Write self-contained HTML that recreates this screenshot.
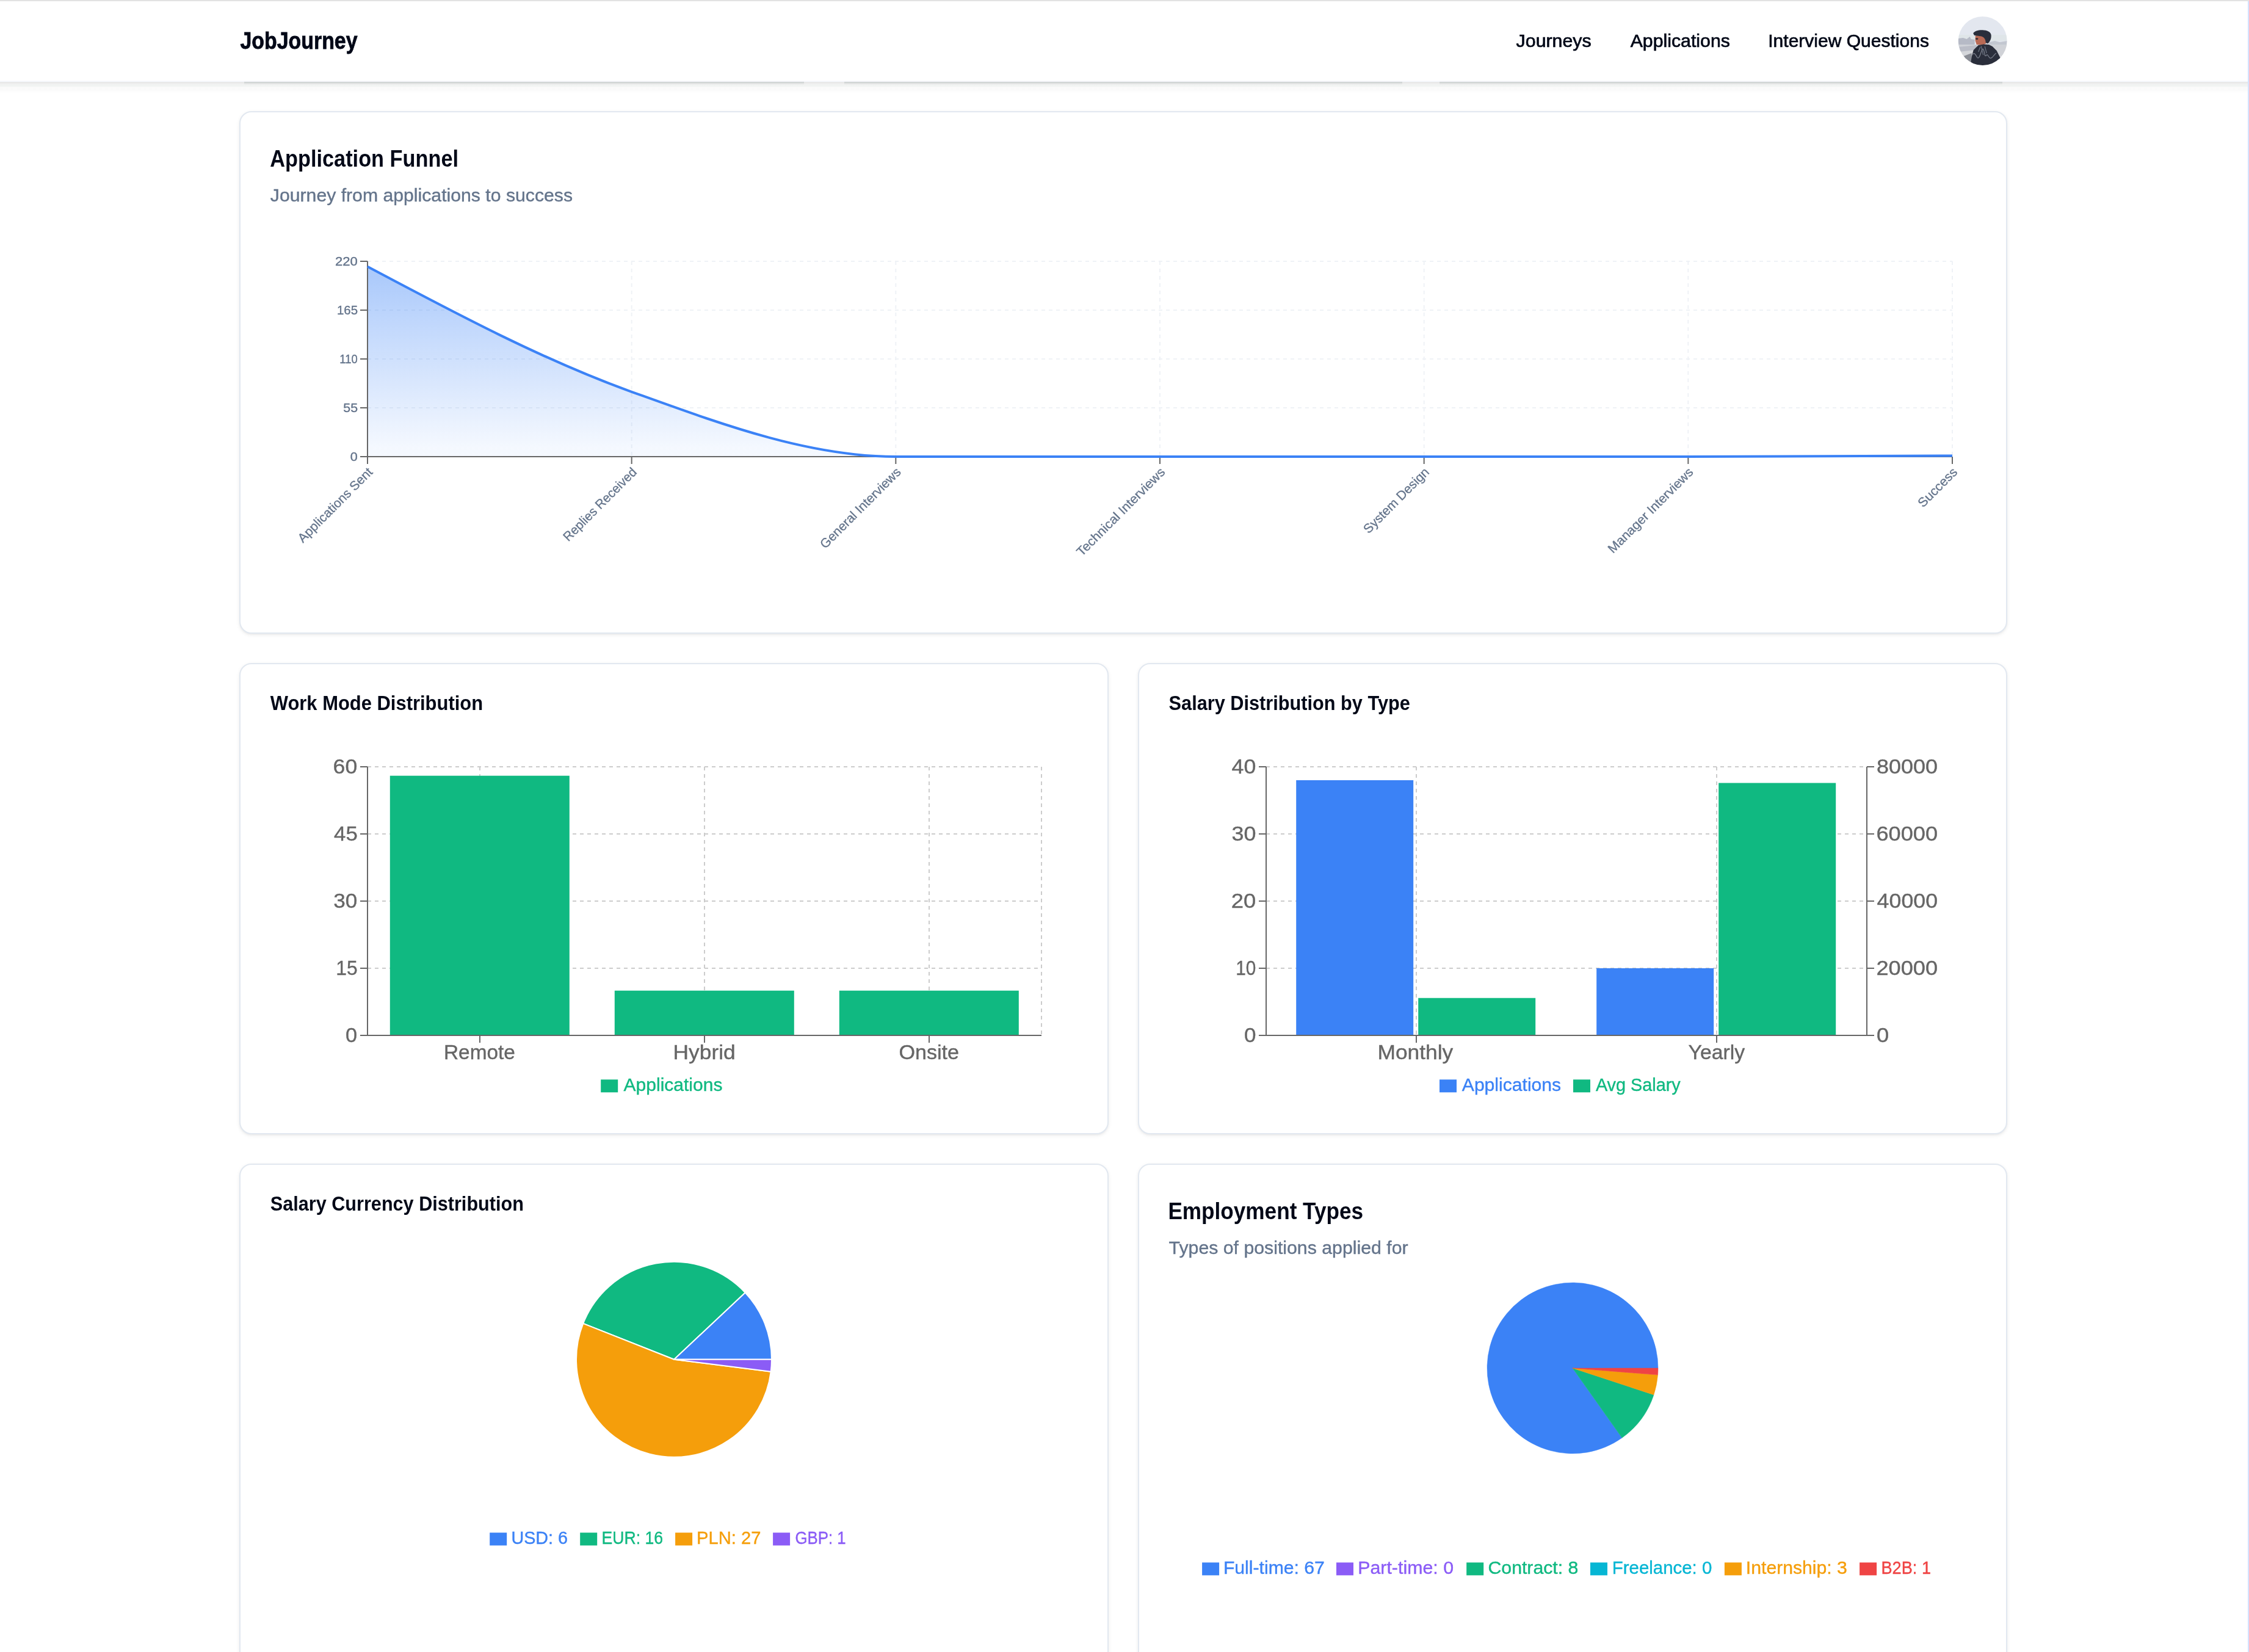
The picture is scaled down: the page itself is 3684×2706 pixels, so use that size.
<!DOCTYPE html>
<html><head><meta charset="utf-8"><title>JobJourney</title>
<style>
html,body{margin:0;padding:0;background:#fff;}
body{width:3684px;height:2706px;overflow:hidden;position:relative;font-family:"Liberation Sans",sans-serif;}
.card{position:absolute;box-sizing:border-box;background:#fff;border:2px solid #e2e8f0;border-radius:20px;box-shadow:0 2px 6px rgba(0,0,0,.07),0 2px 4px -2px rgba(0,0,0,.07);}
.ov{position:absolute;left:0;top:0;will-change:transform;}
.hdr{position:absolute;left:0;top:0;width:3682px;height:132px;background:#fff;box-sizing:border-box;border-top:2px solid #e2e2e2;}
.hsh{position:absolute;left:0;top:132px;width:3682px;height:22px;background:linear-gradient(to bottom,#f8fafe 0,#f8fafe 2px,#e8e8e8 2px,#e8e8e8 4px,#eeeeee 4px,#eeeeee 6px,#f1f3f2 6px,#f2f4f3 10px,#fafafa 10px,#fbfbfb 17px,#fdfdfd 17px,#ffffff 22px);}
.pc{position:absolute;top:134px;height:4px;background:linear-gradient(to bottom,#c9caca 0,#c9caca 1px,#d6dfdd 1px,#d6dfdd 2px,#e2e2e2 2px,#e2e2e2 4px);}
.rl{position:absolute;left:3682px;top:2px;width:2px;height:2704px;background:#d4e1fd;}
.tl{position:absolute;left:0;top:0;width:3684px;height:2px;background:#e2e2e2;}
text{font-family:"Liberation Sans",sans-serif;}
</style></head><body>
<div class="card" style="left:392px;top:182px;width:2896px;height:856px"></div>
<div class="card" style="left:392px;top:1086px;width:1424px;height:772px"></div>
<div class="card" style="left:1864px;top:1086px;width:1424px;height:772px"></div>
<div class="card" style="left:392px;top:1906px;width:1424px;height:900px"></div>
<div class="card" style="left:1864px;top:1906px;width:1424px;height:900px"></div>
<svg class="ov" width="3684" height="2706" viewBox="0 0 3684 2706">
<defs><linearGradient id="fg" x1="0" y1="0" x2="0" y2="1"><stop offset="5%" stop-color="#3b82f6" stop-opacity="0.42"/><stop offset="95%" stop-color="#3b82f6" stop-opacity="0.055"/></linearGradient></defs>
<line x1="602" y1="428" x2="3198" y2="428" stroke="#eff2f6" stroke-width="2" stroke-dasharray="6 6"/>
<line x1="602" y1="508" x2="3198" y2="508" stroke="#eff2f6" stroke-width="2" stroke-dasharray="6 6"/>
<line x1="602" y1="588" x2="3198" y2="588" stroke="#eff2f6" stroke-width="2" stroke-dasharray="6 6"/>
<line x1="602" y1="668" x2="3198" y2="668" stroke="#eff2f6" stroke-width="2" stroke-dasharray="6 6"/>
<line x1="1034.67" y1="428" x2="1034.67" y2="748" stroke="#eff2f6" stroke-width="2" stroke-dasharray="6 6"/>
<line x1="1467.33" y1="428" x2="1467.33" y2="748" stroke="#eff2f6" stroke-width="2" stroke-dasharray="6 6"/>
<line x1="1900" y1="428" x2="1900" y2="748" stroke="#eff2f6" stroke-width="2" stroke-dasharray="6 6"/>
<line x1="2332.67" y1="428" x2="2332.67" y2="748" stroke="#eff2f6" stroke-width="2" stroke-dasharray="6 6"/>
<line x1="2765.33" y1="428" x2="2765.33" y2="748" stroke="#eff2f6" stroke-width="2" stroke-dasharray="6 6"/>
<line x1="3198" y1="428" x2="3198" y2="748" stroke="#eff2f6" stroke-width="2" stroke-dasharray="6 6"/>
<path d="M602,436.73C746.22,513.33,890.44,589.94,1034.67,641.82C1178.89,693.7,1323.11,748,1467.33,748C1611.56,748,1755.78,748,1900,748C2044.22,748,2188.44,748,2332.67,748C2476.89,748,2621.11,748,2765.33,748C2909.56,748,3053.78,747.27,3198,746.55L3198,748L602,748Z" fill="url(#fg)"/>
<line x1="602" y1="428" x2="602" y2="748" stroke="#666666" stroke-width="2"/>
<line x1="602" y1="748" x2="3198" y2="748" stroke="#666666" stroke-width="2"/>
<line x1="590" y1="428" x2="602" y2="428" stroke="#666666" stroke-width="2"/>
<line x1="590" y1="508" x2="602" y2="508" stroke="#666666" stroke-width="2"/>
<line x1="590" y1="588" x2="602" y2="588" stroke="#666666" stroke-width="2"/>
<line x1="590" y1="668" x2="602" y2="668" stroke="#666666" stroke-width="2"/>
<line x1="590" y1="748" x2="602" y2="748" stroke="#666666" stroke-width="2"/>
<line x1="602" y1="748" x2="602" y2="760" stroke="#666666" stroke-width="2"/>
<line x1="1034.67" y1="748" x2="1034.67" y2="760" stroke="#666666" stroke-width="2"/>
<line x1="1467.33" y1="748" x2="1467.33" y2="760" stroke="#666666" stroke-width="2"/>
<line x1="1900" y1="748" x2="1900" y2="760" stroke="#666666" stroke-width="2"/>
<line x1="2332.67" y1="748" x2="2332.67" y2="760" stroke="#666666" stroke-width="2"/>
<line x1="2765.33" y1="748" x2="2765.33" y2="760" stroke="#666666" stroke-width="2"/>
<line x1="3198" y1="748" x2="3198" y2="760" stroke="#666666" stroke-width="2"/>
<path d="M602,436.73C746.22,513.33,890.44,589.94,1034.67,641.82C1178.89,693.7,1323.11,748,1467.33,748C1611.56,748,1755.78,748,1900,748C2044.22,748,2188.44,748,2332.67,748C2476.89,748,2621.11,748,2765.33,748C2909.56,748,3053.78,747.27,3198,746.55" fill="none" stroke="#3b82f6" stroke-width="4"/>
<line x1="602" y1="1256" x2="1706" y2="1256" stroke="#cccccc" stroke-width="2" stroke-dasharray="6 6"/>
<line x1="602" y1="1366" x2="1706" y2="1366" stroke="#cccccc" stroke-width="2" stroke-dasharray="6 6"/>
<line x1="602" y1="1476" x2="1706" y2="1476" stroke="#cccccc" stroke-width="2" stroke-dasharray="6 6"/>
<line x1="602" y1="1586" x2="1706" y2="1586" stroke="#cccccc" stroke-width="2" stroke-dasharray="6 6"/>
<line x1="786" y1="1256" x2="786" y2="1696" stroke="#cccccc" stroke-width="2" stroke-dasharray="6 6"/>
<line x1="1154" y1="1256" x2="1154" y2="1696" stroke="#cccccc" stroke-width="2" stroke-dasharray="6 6"/>
<line x1="1522" y1="1256" x2="1522" y2="1696" stroke="#cccccc" stroke-width="2" stroke-dasharray="6 6"/>
<line x1="1706" y1="1256" x2="1706" y2="1696" stroke="#cccccc" stroke-width="2" stroke-dasharray="6 6"/>
<line x1="602" y1="1256" x2="602" y2="1696" stroke="#cccccc" stroke-width="2" stroke-dasharray="6 6"/>
<line x1="2074" y1="1256" x2="3058" y2="1256" stroke="#cccccc" stroke-width="2" stroke-dasharray="6 6"/>
<line x1="2074" y1="1366" x2="3058" y2="1366" stroke="#cccccc" stroke-width="2" stroke-dasharray="6 6"/>
<line x1="2074" y1="1476" x2="3058" y2="1476" stroke="#cccccc" stroke-width="2" stroke-dasharray="6 6"/>
<line x1="2074" y1="1586" x2="3058" y2="1586" stroke="#cccccc" stroke-width="2" stroke-dasharray="6 6"/>
<line x1="2320" y1="1256" x2="2320" y2="1696" stroke="#cccccc" stroke-width="2" stroke-dasharray="6 6"/>
<line x1="2812" y1="1256" x2="2812" y2="1696" stroke="#cccccc" stroke-width="2" stroke-dasharray="6 6"/>
<line x1="2074" y1="1256" x2="2074" y2="1696" stroke="#cccccc" stroke-width="2" stroke-dasharray="6 6"/>
<rect x="638.8" y="1270.67" width="294" height="425.33" fill="#10b981"/>
<rect x="1006.8" y="1622.67" width="294" height="73.33" fill="#10b981"/>
<rect x="1374.8" y="1622.67" width="294" height="73.33" fill="#10b981"/>
<rect x="2123.2" y="1278" width="192" height="418" fill="#3b82f6"/>
<rect x="2323.2" y="1634.73" width="192" height="61.27" fill="#10b981"/>
<rect x="2615.2" y="1586" width="192" height="110" fill="#3b82f6"/>
<rect x="2815.2" y="1282.51" width="192" height="413.49" fill="#10b981"/>
<line x1="602" y1="1256" x2="602" y2="1696" stroke="#666666" stroke-width="2"/>
<line x1="602" y1="1696" x2="1706" y2="1696" stroke="#666666" stroke-width="2"/>
<line x1="590" y1="1256" x2="602" y2="1256" stroke="#666666" stroke-width="2"/>
<line x1="590" y1="1366" x2="602" y2="1366" stroke="#666666" stroke-width="2"/>
<line x1="590" y1="1476" x2="602" y2="1476" stroke="#666666" stroke-width="2"/>
<line x1="590" y1="1586" x2="602" y2="1586" stroke="#666666" stroke-width="2"/>
<line x1="590" y1="1696" x2="602" y2="1696" stroke="#666666" stroke-width="2"/>
<line x1="786" y1="1696" x2="786" y2="1708" stroke="#666666" stroke-width="2"/>
<line x1="1154" y1="1696" x2="1154" y2="1708" stroke="#666666" stroke-width="2"/>
<line x1="1522" y1="1696" x2="1522" y2="1708" stroke="#666666" stroke-width="2"/>
<line x1="2074" y1="1256" x2="2074" y2="1696" stroke="#666666" stroke-width="2"/>
<line x1="2074" y1="1696" x2="3058" y2="1696" stroke="#666666" stroke-width="2"/>
<line x1="2062" y1="1256" x2="2074" y2="1256" stroke="#666666" stroke-width="2"/>
<line x1="3058" y1="1256" x2="3070" y2="1256" stroke="#666666" stroke-width="2"/>
<line x1="2062" y1="1366" x2="2074" y2="1366" stroke="#666666" stroke-width="2"/>
<line x1="3058" y1="1366" x2="3070" y2="1366" stroke="#666666" stroke-width="2"/>
<line x1="2062" y1="1476" x2="2074" y2="1476" stroke="#666666" stroke-width="2"/>
<line x1="3058" y1="1476" x2="3070" y2="1476" stroke="#666666" stroke-width="2"/>
<line x1="2062" y1="1586" x2="2074" y2="1586" stroke="#666666" stroke-width="2"/>
<line x1="3058" y1="1586" x2="3070" y2="1586" stroke="#666666" stroke-width="2"/>
<line x1="2062" y1="1696" x2="2074" y2="1696" stroke="#666666" stroke-width="2"/>
<line x1="3058" y1="1696" x2="3070" y2="1696" stroke="#666666" stroke-width="2"/>
<line x1="3058" y1="1256" x2="3058" y2="1696" stroke="#666666" stroke-width="2"/>
<line x1="2320" y1="1696" x2="2320" y2="1708" stroke="#666666" stroke-width="2"/>
<line x1="2812" y1="1696" x2="2812" y2="1708" stroke="#666666" stroke-width="2"/>
<rect x="984.2" y="1768.3" width="28" height="21" fill="#10b981"/>
<rect x="2358" y="1768.3" width="28" height="21" fill="#3b82f6"/>
<rect x="2577" y="1768.3" width="28" height="21" fill="#10b981"/>
<rect x="802.2" y="2510.5" width="28" height="21" fill="#3b82f6"/>
<rect x="950.2" y="2510.5" width="28" height="21" fill="#10b981"/>
<rect x="1106.1" y="2510.5" width="28" height="21" fill="#f59e0b"/>
<rect x="1266.1" y="2510.5" width="28" height="21" fill="#8b5cf6"/>
<rect x="1969.1" y="2559.4" width="28" height="21" fill="#3b82f6"/>
<rect x="2189" y="2559.4" width="28" height="21" fill="#8b5cf6"/>
<rect x="2402.2" y="2559.4" width="28" height="21" fill="#10b981"/>
<rect x="2605" y="2559.4" width="28" height="21" fill="#06b6d4"/>
<rect x="2824.9" y="2559.4" width="28" height="21" fill="#f59e0b"/>
<rect x="3046.1" y="2559.4" width="28" height="21" fill="#ef4444"/>
<path d="M1104,2226.8L1264,2226.8A160,160,0,0,0,1220.63,2117.27Z" fill="#3b82f6" stroke="#ffffff" stroke-width="2" stroke-linejoin="round"/>
<path d="M1104,2226.8L1220.63,2117.27A160,160,0,0,0,955.24,2167.9Z" fill="#10b981" stroke="#ffffff" stroke-width="2" stroke-linejoin="round"/>
<path d="M1104,2226.8L955.24,2167.9A160,160,0,1,0,1262.74,2246.85Z" fill="#f59e0b" stroke="#ffffff" stroke-width="2" stroke-linejoin="round"/>
<path d="M1104,2226.8L1262.74,2246.85A160,160,0,0,0,1264,2226.8Z" fill="#8b5cf6" stroke="#ffffff" stroke-width="2" stroke-linejoin="round"/>
<path d="M2576,2241L2716,2241A140,140,0,1,0,2656.93,2355.24Z" fill="#3b82f6" stroke="#3b82f6" stroke-width="0.5"/>
<path d="M2576,2241L2656.93,2355.24A140,140,0,0,0,2708.97,2284.79Z" fill="#10b981" stroke="#10b981" stroke-width="0.5"/>
<path d="M2576,2241L2708.97,2284.79A140,140,0,0,0,2715.56,2252.12Z" fill="#f59e0b" stroke="#f59e0b" stroke-width="0.5"/>
<path d="M2576,2241L2715.56,2252.12A140,140,0,0,0,2716,2241Z" fill="#ef4444" stroke="#ef4444" stroke-width="0.5"/>
<text transform="translate(611.6 774.6) rotate(-45)" x="0" y="0" text-anchor="end" font-size="21.08" textLength="163.06" lengthAdjust="spacingAndGlyphs" fill="#64748b" stroke="#64748b" stroke-width="0.3">Applications Sent</text>
<text transform="translate(1044.27 774.6) rotate(-45)" x="0" y="0" text-anchor="end" font-size="21.08" textLength="160.19" lengthAdjust="spacingAndGlyphs" fill="#64748b" stroke="#64748b" stroke-width="0.3">Replies Received</text>
<text transform="translate(1476.93 774.6) rotate(-45)" x="0" y="0" text-anchor="end" font-size="21.08" textLength="176.96" lengthAdjust="spacingAndGlyphs" fill="#64748b" stroke="#64748b" stroke-width="0.3">General Interviews</text>
<text transform="translate(1909.6 774.6) rotate(-45)" x="0" y="0" text-anchor="end" font-size="21.08" textLength="194.6" lengthAdjust="spacingAndGlyphs" fill="#64748b" stroke="#64748b" stroke-width="0.3">Technical Interviews</text>
<text transform="translate(2342.27 774.6) rotate(-45)" x="0" y="0" text-anchor="end" font-size="21.08" textLength="142.09" lengthAdjust="spacingAndGlyphs" fill="#64748b" stroke="#64748b" stroke-width="0.3">System Design</text>
<text transform="translate(2774.93 774.6) rotate(-45)" x="0" y="0" text-anchor="end" font-size="21.08" textLength="187.57" lengthAdjust="spacingAndGlyphs" fill="#64748b" stroke="#64748b" stroke-width="0.3">Manager Interviews</text>
<text transform="translate(3207.6 774.6) rotate(-45)" x="0" y="0" text-anchor="end" font-size="21.08" textLength="81.46" lengthAdjust="spacingAndGlyphs" fill="#64748b" stroke="#64748b" stroke-width="0.3">Success</text>
<text x="442.31" y="273.1" font-size="38.52" textLength="308.71" lengthAdjust="spacingAndGlyphs" fill="#020817" font-weight="700">Application Funnel</text>
<text x="442.83" y="329.8" font-size="29.65" textLength="495.22" lengthAdjust="spacingAndGlyphs" fill="#64748b" stroke="#64748b" stroke-width="0.4">Journey from applications to success</text>
<text x="548.97" y="435.25" font-size="21.08" textLength="36.78" lengthAdjust="spacingAndGlyphs" fill="#64748b" stroke="#64748b" stroke-width="0.4">220</text>
<text x="552.03" y="515.25" font-size="21.08" textLength="34" lengthAdjust="spacingAndGlyphs" fill="#64748b" stroke="#64748b" stroke-width="0.4">165</text>
<text x="556.35" y="595.25" font-size="21.08" textLength="29.31" lengthAdjust="spacingAndGlyphs" fill="#64748b" stroke="#64748b" stroke-width="0.4">110</text>
<text x="562.33" y="675.25" font-size="21.08" textLength="23.73" lengthAdjust="spacingAndGlyphs" fill="#64748b" stroke="#64748b" stroke-width="0.4">55</text>
<text x="573.73" y="755.25" font-size="21.08" textLength="12.01" lengthAdjust="spacingAndGlyphs" fill="#64748b" stroke="#64748b" stroke-width="0.4">0</text>
<text x="442.8" y="1162.8" font-size="33.43" textLength="348.3" lengthAdjust="spacingAndGlyphs" fill="#020817" font-weight="700">Work Mode Distribution</text>
<text x="545.63" y="1266.7" font-size="34.01" textLength="39.66" lengthAdjust="spacingAndGlyphs" fill="#666666" stroke="#666666" stroke-width="0.4">60</text>
<text x="547.06" y="1376.7" font-size="34.01" textLength="38.76" lengthAdjust="spacingAndGlyphs" fill="#666666" stroke="#666666" stroke-width="0.4">45</text>
<text x="546.2" y="1486.7" font-size="34.01" textLength="39.07" lengthAdjust="spacingAndGlyphs" fill="#666666" stroke="#666666" stroke-width="0.4">30</text>
<text x="550.31" y="1596.7" font-size="34.01" textLength="35.38" lengthAdjust="spacingAndGlyphs" fill="#666666" stroke="#666666" stroke-width="0.4">15</text>
<text x="566.12" y="1706.7" font-size="34.01" textLength="19.13" lengthAdjust="spacingAndGlyphs" fill="#666666" stroke="#666666" stroke-width="0.4">0</text>
<text x="726.99" y="1734.7" font-size="33.43" textLength="116.96" lengthAdjust="spacingAndGlyphs" fill="#666666" stroke="#666666" stroke-width="0.4">Remote</text>
<text x="1102.54" y="1734.7" font-size="33.43" textLength="102.15" lengthAdjust="spacingAndGlyphs" fill="#666666" stroke="#666666" stroke-width="0.4">Hybrid</text>
<text x="1472.4" y="1734.7" font-size="33.43" textLength="98.58" lengthAdjust="spacingAndGlyphs" fill="#666666" stroke="#666666" stroke-width="0.4">Onsite</text>
<text x="1021.6" y="1787" font-size="29.65" textLength="161.84" lengthAdjust="spacingAndGlyphs" fill="#10b981" stroke="#10b981" stroke-width="0.4">Applications</text>
<text x="1914.62" y="1162.8" font-size="33.43" textLength="395.24" lengthAdjust="spacingAndGlyphs" fill="#020817" font-weight="700">Salary Distribution by Type</text>
<text x="2017.64" y="1266.7" font-size="34.01" textLength="39.75" lengthAdjust="spacingAndGlyphs" fill="#666666" stroke="#666666" stroke-width="0.4">40</text>
<text x="2017.48" y="1376.7" font-size="34.01" textLength="39.92" lengthAdjust="spacingAndGlyphs" fill="#666666" stroke="#666666" stroke-width="0.4">30</text>
<text x="2016.89" y="1486.7" font-size="34.01" textLength="40.51" lengthAdjust="spacingAndGlyphs" fill="#666666" stroke="#666666" stroke-width="0.4">20</text>
<text x="2024.14" y="1596.7" font-size="34.01" textLength="33.1" lengthAdjust="spacingAndGlyphs" fill="#666666" stroke="#666666" stroke-width="0.4">10</text>
<text x="2037.91" y="1706.7" font-size="34.01" textLength="19.47" lengthAdjust="spacingAndGlyphs" fill="#666666" stroke="#666666" stroke-width="0.4">0</text>
<text x="3074.08" y="1266.7" font-size="34.01" textLength="100.02" lengthAdjust="spacingAndGlyphs" fill="#666666" stroke="#666666" stroke-width="0.4">80000</text>
<text x="3073.5" y="1376.7" font-size="34.01" textLength="100.6" lengthAdjust="spacingAndGlyphs" fill="#666666" stroke="#666666" stroke-width="0.4">60000</text>
<text x="3074.64" y="1486.7" font-size="34.01" textLength="99.45" lengthAdjust="spacingAndGlyphs" fill="#666666" stroke="#666666" stroke-width="0.4">40000</text>
<text x="3073.5" y="1596.7" font-size="34.01" textLength="100.6" lengthAdjust="spacingAndGlyphs" fill="#666666" stroke="#666666" stroke-width="0.4">20000</text>
<text x="3074.06" y="1706.7" font-size="34.01" textLength="20.24" lengthAdjust="spacingAndGlyphs" fill="#666666" stroke="#666666" stroke-width="0.4">0</text>
<text x="2256.44" y="1734.7" font-size="33.43" textLength="123.76" lengthAdjust="spacingAndGlyphs" fill="#666666" stroke="#666666" stroke-width="0.4">Monthly</text>
<text x="2765.57" y="1734.7" font-size="33.43" textLength="92.63" lengthAdjust="spacingAndGlyphs" fill="#666666" stroke="#666666" stroke-width="0.4">Yearly</text>
<text x="2394.8" y="1787" font-size="29.65" textLength="162.34" lengthAdjust="spacingAndGlyphs" fill="#3b82f6" stroke="#3b82f6" stroke-width="0.4">Applications</text>
<text x="2613.9" y="1787" font-size="29.65" textLength="138.9" lengthAdjust="spacingAndGlyphs" fill="#10b981" stroke="#10b981" stroke-width="0.4">Avg Salary</text>
<text x="442.82" y="1982.8" font-size="33.43" textLength="415.06" lengthAdjust="spacingAndGlyphs" fill="#020817" font-weight="700">Salary Currency Distribution</text>
<text x="837.41" y="2528.9" font-size="29.65" textLength="92.56" lengthAdjust="spacingAndGlyphs" fill="#3b82f6" stroke="#3b82f6" stroke-width="0.4">USD: 6</text>
<text x="985.62" y="2528.9" font-size="29.65" textLength="100.56" lengthAdjust="spacingAndGlyphs" fill="#10b981" stroke="#10b981" stroke-width="0.4">EUR: 16</text>
<text x="1141.12" y="2528.9" font-size="29.65" textLength="105.36" lengthAdjust="spacingAndGlyphs" fill="#f59e0b" stroke="#f59e0b" stroke-width="0.4">PLN: 27</text>
<text x="1302.39" y="2528.9" font-size="29.65" textLength="83.36" lengthAdjust="spacingAndGlyphs" fill="#8b5cf6" stroke="#8b5cf6" stroke-width="0.4">GBP: 1</text>
<text x="1913.4" y="1996.7" font-size="38.52" textLength="319.72" lengthAdjust="spacingAndGlyphs" fill="#020817" font-weight="700">Employment Types</text>
<text x="1914.63" y="2054.1" font-size="29.65" textLength="391.92" lengthAdjust="spacingAndGlyphs" fill="#64748b" stroke="#64748b" stroke-width="0.4">Types of positions applied for</text>
<text x="2003.94" y="2577.8" font-size="29.65" textLength="165.88" lengthAdjust="spacingAndGlyphs" fill="#3b82f6" stroke="#3b82f6" stroke-width="0.4">Full-time: 67</text>
<text x="2224.23" y="2577.8" font-size="29.65" textLength="156.83" lengthAdjust="spacingAndGlyphs" fill="#8b5cf6" stroke="#8b5cf6" stroke-width="0.4">Part-time: 0</text>
<text x="2437.48" y="2577.8" font-size="29.65" textLength="147.94" lengthAdjust="spacingAndGlyphs" fill="#10b981" stroke="#10b981" stroke-width="0.4">Contract: 8</text>
<text x="2640.8" y="2577.8" font-size="29.65" textLength="163.53" lengthAdjust="spacingAndGlyphs" fill="#06b6d4" stroke="#06b6d4" stroke-width="0.4">Freelance: 0</text>
<text x="2859.84" y="2577.8" font-size="29.65" textLength="166.08" lengthAdjust="spacingAndGlyphs" fill="#f59e0b" stroke="#f59e0b" stroke-width="0.4">Internship: 3</text>
<text x="3081.48" y="2577.8" font-size="29.65" textLength="81.52" lengthAdjust="spacingAndGlyphs" fill="#ef4444" stroke="#ef4444" stroke-width="0.4">B2B: 1</text>
</svg>
<div class="hdr"></div>
<div class="hsh"></div>
<div class="pc" style="left:400px;width:917px"></div>
<div class="pc" style="left:1383px;width:914px"></div>
<div class="pc" style="left:2358px;width:922px"></div>
<div class="rl"></div>
<div class="tl"></div>
<svg class="ov" width="3684" height="140" viewBox="0 0 3684 140">
<text x="393.4" y="79.9" font-size="38.52" textLength="192.18" lengthAdjust="spacingAndGlyphs" fill="#020817" font-weight="700" stroke="#020817" stroke-width="0.8">JobJourney</text>
<text x="2483.63" y="77.2" font-size="29.65" textLength="123.02" lengthAdjust="spacingAndGlyphs" fill="#020817" stroke="#020817" stroke-width="0.7">Journeys</text>
<text x="2670.7" y="77.2" font-size="29.65" textLength="163.15" lengthAdjust="spacingAndGlyphs" fill="#020817" stroke="#020817" stroke-width="0.7">Applications</text>
<text x="2896.25" y="77.2" font-size="29.65" textLength="263.68" lengthAdjust="spacingAndGlyphs" fill="#020817" stroke="#020817" stroke-width="0.7">Interview Questions</text>
<svg x="3207.7" y="27" width="80" height="80" viewBox="0 0 80 80"><defs><clipPath id="av"><circle cx="40" cy="40" r="40"/></clipPath><filter id="avb" x="-10%" y="-10%" width="120%" height="120%"><feGaussianBlur stdDeviation="0.55"/></filter></defs>
<g clip-path="url(#av)"><g filter="url(#avb)"><rect x="-5" y="-5" width="90" height="90" fill="#e3e7ef"/>
<rect y="30" width="80" height="10" fill="#dfe5e8"/>
<path d="M0,36 L8,35 L14,37 L19,33 L21,37 L27,38 L27,52 L0,52Z" fill="#b6bac6"/>
<path d="M50,42 L60,40 L68,42 L80,40 L80,52 L50,52Z" fill="#c3c7d0"/>
<rect y="46" width="80" height="34" fill="#cfd2d8"/>
<path d="M0,50 L30,47 L30,60 L0,62Z" fill="#babdc7"/>
<path d="M0,58 L26,55 L24,80 L0,80Z" fill="#d4d6da"/>
<path d="M56,50 L80,47 L80,80 L60,80Z" fill="#d0d2d7"/>
<path d="M6,66 L22,60 L22,80 L12,80Z" fill="#8b8e96"/>
<path d="M28,32 L33,30 L44,33 L46,44 L40,47 L30,46 L28,40Z" fill="#b96a55"/>
<path d="M24.5,27.5 C27,23 36,21.5 42,22.5 C50,23 54.5,27 54,32 C54,38 51,42 48.5,44.5 L45,43 C45,38 43,34 38,32.5 C33,31.5 28,32 26,30.5Z" fill="#2a2e3a"/>
<path d="M33,47 L42,45.5 L50,46 L56,49 L63,56 L69,68 L66,80 L20,80 L22,66 L25,55 L29,51Z" fill="#2b2f3b"/>
<ellipse cx="30.5" cy="36.5" rx="2.2" ry="1.6" fill="#3a3038"/>
<path d="M37.5,48.5 L41,63 M43.5,49 L46.5,60 M36,50 L33,58" fill="none" stroke="#69707f" stroke-width="1.3"/>
<path d="M24,62 C27,58 29,64 31,67 C33,70 35,66 37,60 C39,54 40,50 42,56 C44,62 43,66 46,64 C48,60 49,66 52,68 C55,70 58,63 62,60" fill="none" stroke="#7d828f" stroke-width="1.2"/>
</g></g></svg>
</svg>
</body></html>
